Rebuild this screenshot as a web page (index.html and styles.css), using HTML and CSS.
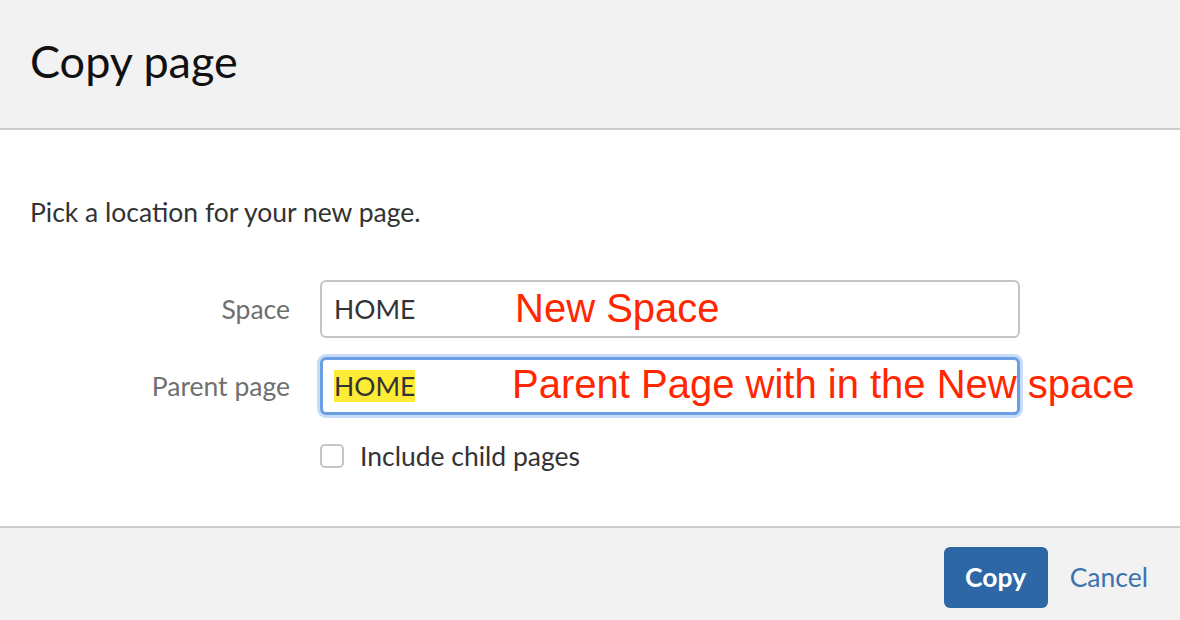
FILE: index.html
```html
<!DOCTYPE html>
<html lang="en">
<head>
<meta charset="UTF-8">
<title>Copy page</title>
<link rel="stylesheet" href="styles.css">
</head>
<body>
<div class="dialog">
    <header class="dialog-header">
        <h2 class="title">Copy page</h2>
    </header>
    <section class="dialog-body">
        <p class="intro">Pick a location for your new page.</p>
        <div class="form">
            <label class="label">Space</label>
            <div class="field-wrap">
                <div class="field">HOME</div>
                <span class="note note-space">New Space</span>
            </div>
            <label class="label">Parent page</label>
            <div class="field-wrap">
                <div class="field focus"><mark class="sel">HOME</mark></div>
                <span class="note note-parent">Parent Page with in the New space</span>
            </div>
            <span></span>
            <label class="check-row">
                <input type="checkbox" class="check">
                <span>Include child pages</span>
            </label>
        </div>
    </section>
    <footer class="dialog-footer">
        <button class="btn-primary">Copy</button>
        <a href="javascript:;" class="link">Cancel</a>
    </footer>
</div>
</body>
</html>
```

FILE: styles.css
```css
html, body {margin: 0;padding: 0;}
body {font-family: "Lato", "Noto Sans", sans-serif;color: #333;background: #fff;}
.dialog {display: flex;flex-direction: column;width: 1180px;height: 620px;}
.dialog-header {height: 128px;display: flex;align-items: center;padding-left: 30px;background: #f2f2f2;border-bottom: 2px solid #ccc;}
.title {margin: 0 0 7px;font-size: 45px;font-weight: 400;color: #111;}
.dialog-body {flex: 1;padding: 64px 30px 0;}
.intro {margin: 0 0 50px;font-size: 26.5px;line-height: 36px;color: #333;}
.form {display: grid;grid-template-columns: 260px 700px;column-gap: 30px;row-gap: 19px;align-items: center;}
.label {text-align: right;font-size: 26.5px;color: #707070;}
.field-wrap {position: relative;}
.field {box-sizing: border-box;height: 58px;padding: 0 12px;display: flex;align-items: center;border: 2px solid #c4c4c4;border-radius: 6px;font-size: 26.5px;color: #333;background: #fff;}
.field.focus {border: 3px solid #6a9fe6;box-shadow: 0 0 0 3px #c6dcf8;padding: 0 11px;}
.sel {background: #fdeb36;color: #333;padding: 0;}
.note {position: absolute;top: 8px;font-family: "Liberation Sans", Arial, sans-serif;font-size: 40px;line-height: 40px;color: #ff2600;white-space: nowrap;}
.note-space {left: 195px;}
.note-parent {left: 192px;top: 7px;}
.check-row {display: flex;align-items: center;gap: 16px;margin-top: 6px;font-size: 26.5px;color: #333;}
.check {appearance: none;-webkit-appearance: none;margin: 0;width: 24px;height: 24px;border: 2px solid #c4c4c4;border-radius: 5px;background: #fff;}
.dialog-footer {height: 94px;box-sizing: border-box;display: flex;align-items: center;justify-content: flex-end;gap: 22px;padding: 6px 32px 0 0;background: #f2f2f2;border-top: 2px solid #ccc;}
.btn-primary {width: 104px;height: 61px;border: 0;border-radius: 6px;background: #2d67a6;color: #fff;font: 700 26.5px "Lato", "Noto Sans", sans-serif;}
.link {font-size: 26.5px;color: #3b73af;text-decoration: none;}
```
